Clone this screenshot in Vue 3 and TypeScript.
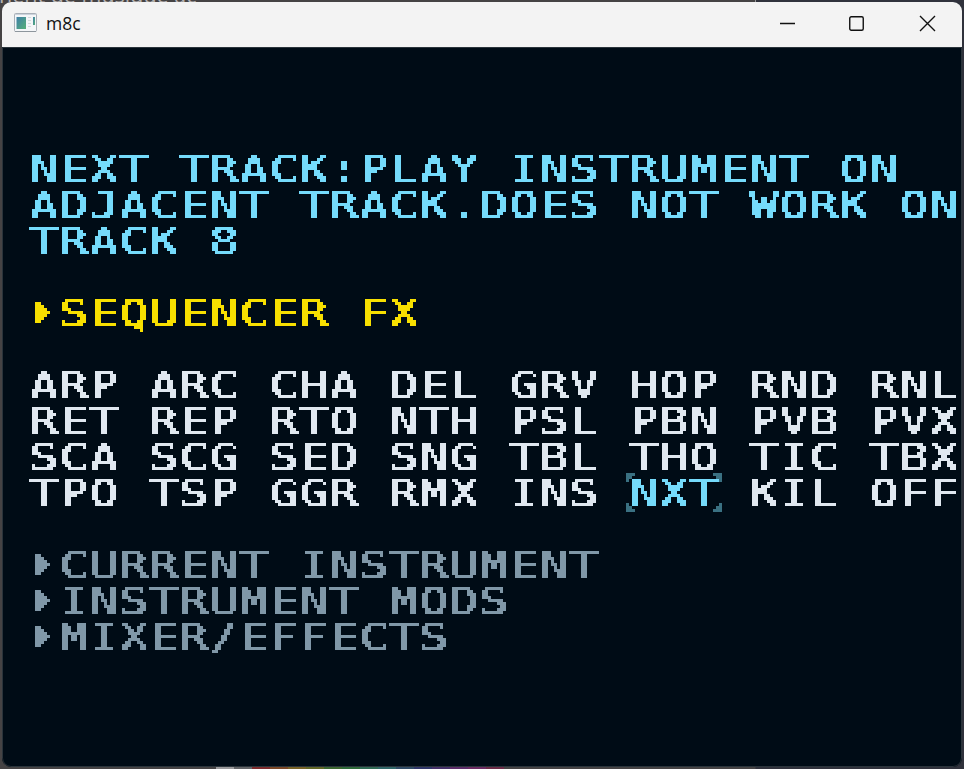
<script setup lang="ts">
const help: string[] = [
  'NEXT TRACK:PLAY INSTRUMENT ON',
  'ADJACENT TRACK.DOES NOT WORK ON',
  'TRACK 8',
]

const commands: string[] = [
  'ARP', 'ARC', 'CHA', 'DEL', 'GRV', 'HOP', 'RND', 'RNL',
  'RET', 'REP', 'RTO', 'NTH', 'PSL', 'PBN', 'PVB', 'PVX',
  'SCA', 'SCG', 'SED', 'SNG', 'TBL', 'THO', 'TIC', 'TBX',
  'TPO', 'TSP', 'GGR', 'RMX', 'INS', 'NXT', 'KIL', 'OFF',
]

const selected = 'NXT'
const groups: string[] = ['CURRENT INSTRUMENT', 'INSTRUMENT MODS', 'MIXER/EFFECTS']

const swatches: string[] = [
  '#9a9a9c', '#626467', '#7c2a2c', '#7a4726', '#776226', '#616726', '#3b6730',
  '#2d6a39', '#2f6a54', '#2f6668', '#2f4b66', '#2e3669', '#443069', '#5b2c69', '#6a2a62', '#6a2a46',
]
</script>

<template>
  <div class="desktop">
    <div class="behind-top"><span>nent de musique ac</span></div>
    <div class="behind-bottom">
      <i v-for="c in swatches" :key="c" :style="{ background: c }"></i>
    </div>
    <svg class="defs" width="0" height="0">
      <!-- Samples the centre of every 3x3 cell and spreads it over the cell -->
      <filter id="pixelate" x="0" y="0" width="1" height="1" color-interpolation-filters="sRGB">
        <feFlood x="1" y="2" width="1" height="1" flood-color="#000" result="dot" />
        <feComposite in="dot" in2="dot" operator="over" x="0" y="1" width="3" height="3" result="cell" />
        <feTile in="cell" result="grid" />
        <feComponentTransfer in="SourceGraphic" result="hard">
          <feFuncA type="discrete" tableValues="0 1" />
        </feComponentTransfer>
        <feComposite in="hard" in2="grid" operator="in" result="samples" />
        <feMorphology in="samples" operator="dilate" radius="1" />
      </filter>
    </svg>
    <main class="window">
      <header class="titlebar">
        <svg class="app-icon" width="23" height="19" viewBox="0 0 23 19">
          <defs>
            <linearGradient id="pane" x1="0" y1="0" x2="1" y2="1">
              <stop offset="0" stop-color="#3f7fa8" />
              <stop offset="1" stop-color="#56b078" />
            </linearGradient>
          </defs>
          <rect x=".5" y=".5" width="22" height="18" rx="1" fill="#f4f6f8" stroke="#a9b0b8" />
          <path d="M1 1.5h21" stroke="#ccd3dc" />
          <path d="M1 18.5h21" stroke="#8d969d" />
          <rect x="2.5" y="4" width="9.5" height="12" fill="url(#pane)" />
          <path d="M14 4.5h3M14 7.5h3M14 10.5h3M14 13.5h3" stroke="#d4d8dc" />
          <rect x="19" y="4" width="2" height="8" fill="url(#pane)" />
        </svg>
        <span class="title">m8c</span>
        <div class="controls">
          <svg width="15" height="15" viewBox="0 0 15 15"><path d="M0 7.5h15" /></svg>
          <svg width="15" height="15" viewBox="0 0 15 15"><rect x=".75" y=".75" width="13.5" height="13.5" rx="1.5" /></svg>
          <svg width="15" height="15" viewBox="0 0 15 15"><path d="M0 0l15 15M15 0L0 15" /></svg>
        </div>
      </header>
      <section class="screen">
        <div class="help pixels">
          <p v-for="line in help" :key="line" class="line"><span class="px">{{ line }}</span></p>
        </div>
        <div class="line heading pixels">
          <svg class="arrow" width="15" height="21" viewBox="0 0 5 7"><path d="M0 0h2v1h1v1h1v1h1v1h-1v1h-1v1h-1v1h-2z" /></svg>
          <span class="px">SEQUENCER FX</span>
        </div>
        <div class="commands pixels">
          <div v-for="cmd in commands" :key="cmd" class="line cmd" :class="{ active: cmd === selected }">
            <span class="px">{{ cmd }}</span>
            <svg v-if="cmd === selected" class="cursor" width="96" height="39" viewBox="0 0 32 13">
              <path d="M0 0h3v1h-1v1h-1v1h-1zM32 0h-3v1h1v1h1v1h1zM0 13h3v-1h-1v-1h-1v-1h-1zM32 13h-3v-1h1v-1h1v-1h1z" />
            </svg>
          </div>
        </div>
        <div class="groups pixels">
          <div v-for="g in groups" :key="g" class="line">
            <svg class="arrow" width="15" height="21" viewBox="0 0 5 7"><path d="M0 0h2v1h1v1h1v1h1v1h-1v1h-1v1h-1v1h-2z" /></svg>
            <span class="px">{{ g }}</span>
          </div>
        </div>
      </section>
    </main>
  </div>
</template>

<style>
body {
  margin: 0;
  overflow: hidden;
}
</style>

<style scoped>
.desktop {
  position: relative;
  width: 964px;
  height: 769px;
  box-sizing: border-box;
  padding: 2px;
  overflow: hidden;
  background: linear-gradient(90deg, #454344 0, #454344 755px, #30323c 756px);
}
.defs {
  position: absolute;
}
.behind-top {
  position: absolute;
  left: 0;
  top: 0;
  width: 755px;
  height: 3px;
  overflow: hidden;
  border-right: 1px solid #999;
}
.behind-top span {
  position: absolute;
  left: -1px;
  top: -16px;
  font: 21.5px/22px "Open Sans", sans-serif;
  white-space: nowrap;
  color: #b5b2b2;
}
.behind-bottom {
  position: absolute;
  left: 216px;
  bottom: 0;
  display: flex;
  height: 2px;
}
.behind-bottom i {
  width: 18px;
}
.window {
  position: relative;
  width: 960px;
  height: 765px;
  display: flex;
  flex-direction: column;
  overflow: hidden;
  border-radius: 9px;
  background: #000c16;
}
.titlebar {
  flex: none;
  display: flex;
  align-items: center;
  height: 45px;
  box-sizing: border-box;
  padding: 0 27px 2px 12px;
  background: #f3f3f3;
}
.app-icon {
  flex: none;
  margin-top: -2px;
}
.title {
  margin: -1px 0 0 9px;
  font: 17.5px/24px "Open Sans", sans-serif;
  color: #111;
}
.controls {
  display: flex;
  gap: 55px;
  margin-left: auto;
}
.controls svg {
  fill: none;
  stroke: #111;
  stroke-width: 1.4;
  overflow: visible;
}
.controls svg:nth-child(2) {
  margin: 0 1px 0 -1px;
}
.screen {
  flex: 1;
  display: flex;
  flex-direction: column;
  gap: 36px;
  padding: 103px 0 0 26px;
  border: solid #2a343b;
  border-width: 1px 1px 1px;
  border-radius: 0 0 9px 9px;
}
.pixels {
  filter: url(#pixelate);
}
.line {
  display: flex;
  align-items: center;
  height: 36px;
  margin: 0;
}
.px {
  display: block;
  font: 37px/36px "DejaVu Sans Mono", monospace;
  letter-spacing: 1.725px;
  text-rendering: geometricPrecision;
  white-space: pre;
  transform: translate(1px, 1px) scaleX(1.25);
  transform-origin: 0 50%;
  text-shadow: 0.6px 0 currentColor, -0.6px 0 currentColor;
}
.arrow {
  flex: none;
  margin: -1px 9px 0 6px;
  fill: currentColor;
}
.help {
  color: #75dbfb;
}
.heading {
  color: #f8e000;
}
.commands {
  display: grid;
  grid-template-columns: repeat(8, 120px);
  color: #e0e8f0;
}
.cmd {
  position: relative;
}
.active {
  color: #75dbfb;
}
.cursor {
  position: absolute;
  left: -3px;
  top: -2px;
  fill: #3a7182;
}
.groups {
  color: #8098a8;
}
</style>
